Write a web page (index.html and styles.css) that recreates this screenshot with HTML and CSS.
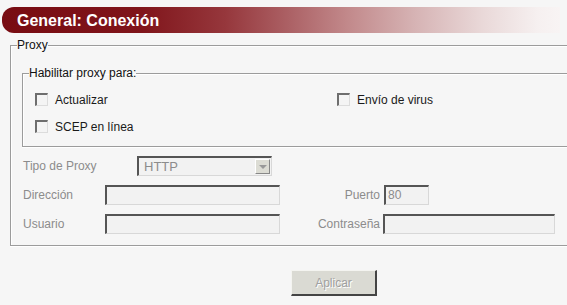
FILE: index.html
```html
<!DOCTYPE html>
<html lang="es">
<head>
    <meta charset="UTF-8">
    <title>General: Conexión</title>
    <link rel="stylesheet" href="styles.css">
</head>
<body>
    <div class="header">General: Conexión</div>

    <fieldset class="group group-outer">
        <legend>Proxy</legend>

        <fieldset class="group group-inner">
            <legend>Habilitar proxy para:</legend>
            <div class="check-row">
                <label class="check-item check-wide"><span class="check"></span>Actualizar</label>
                <label class="check-item"><span class="check"></span>Envío de virus</label>
            </div>
            <div class="check-row">
                <label class="check-item"><span class="check"></span>SCEP en línea</label>
            </div>
        </fieldset>

        <div class="field-row">
            <span class="label label-type">Tipo de Proxy</span>
            <div class="select">
                <span class="select-value">HTTP</span>
                <span class="select-btn"><span class="arrow"></span></span>
            </div>
        </div>
        <div class="field-row">
            <span class="label label-left">Dirección</span>
            <span class="input input-mid"></span>
            <span class="label label-right">Puerto</span>
            <span class="input input-port">80</span>
        </div>
        <div class="field-row">
            <span class="label label-left">Usuario</span>
            <span class="input input-mid"></span>
            <span class="label label-right label-pass">Contraseña</span>
            <span class="input input-pass"></span>
        </div>
    </fieldset>

    <div class="actions">
        <button class="button" disabled>Aplicar</button>
    </div>
</body>
</html>
```

FILE: styles.css
```css
body {
    margin: 0;
    padding: 0;
    background: #f6f6f6;
    font-family: 'Liberation Sans', Arial, sans-serif;
    font-size: 12px;
    color: #1a1a1a;
    overflow: hidden;
}

.header {
    margin: 7px 7px 0 2px;
    height: 26px;
    line-height: 27px;
    padding-left: 15px;
    border-radius: 12px 0 0 12px;
    background: linear-gradient(to right, #780c12 0%, #80151b 25%, #96373c 40%, #ad6367 52%, #c2898b 62%, #d6b3b4 74%, #e9d8d8 86%, #f6f0f0 96%, #f8f4f4 100%);
    color: #fff;
    font-size: 16px;
    font-weight: bold;
}

/* marcos tipo groupbox, abiertos por la derecha */
.group {
    border: 1px solid #9c9c9c;
    border-right: none;
    box-shadow: inset 1px 1px 0 #fff, 0 1px 0 #fff;
    margin: 0;
    min-width: 0;
}

.group legend {
    padding: 0;
    margin: 0;
    line-height: 14px;
    color: #111;
}

.group-outer {
    margin: 5px 0 0 10px;
    padding: 0 0 11px 6px;
}

.group-inner {
    margin: 14px 0 0 5px;
    padding: 0 0 6px 6px;
}

.check-row {
    display: flex;
    align-items: center;
    height: 27px;
}

.check-row:first-of-type {
    margin-top: 6px;
}

.check-item {
    display: flex;
    align-items: center;
    margin-left: 6px;
}

.check-wide {
    width: 296px;
}

.check {
    box-sizing: border-box;
    width: 13px;
    height: 13px;
    margin-right: 7px;
    background: #f4f4f4;
    border-top: 2px solid #6e6e6e;
    border-left: 2px solid #6e6e6e;
    border-right: 1px solid #dcdcdc;
    border-bottom: 1px solid #dcdcdc;
}

.field-row {
    display: flex;
    align-items: center;
    height: 20px;
    margin-top: 9px;
}

.label {
    color: #8c8c8c;
}

.label-type {
    width: 114px;
    margin-left: 6px;
}

.label-left {
    width: 82px;
    margin-left: 6px;
}

.label-right {
    width: 100px;
    text-align: right;
    padding-right: 4px;
}

.label-pass {
    padding-right: 3px;
}

.input,
.select {
    box-sizing: border-box;
    height: 20px;
    background: #f2f2f2;
    border-top: 2px solid #555;
    border-left: 2px solid #555;
    border-right: 1px solid #d8d8d8;
    border-bottom: 1px solid #d8d8d8;
    color: #8c8c8c;
    line-height: 17px;
    padding-left: 2px;
}

.input-mid {
    width: 175px;
}

.input-port {
    width: 45px;
}

.input-pass {
    width: 172px;
}

.select {
    width: 135px;
    display: flex;
    justify-content: space-between;
    align-items: center;
    padding: 0 1px 0 5px;
    font-size: 13px;
}

.select-btn {
    box-sizing: border-box;
    width: 15px;
    height: 15px;
    background: #dcdcd4;
    border-top: 1px solid #fff;
    border-left: 1px solid #fff;
    border-right: 1px solid #888;
    border-bottom: 1px solid #888;
    display: flex;
    align-items: center;
    justify-content: center;
}

.arrow {
    width: 0;
    height: 0;
    border-left: 4px solid transparent;
    border-right: 4px solid transparent;
    border-top: 4px solid #999;
}

.actions {
    padding: 24px 0 0 291px;
}

.button {
    box-sizing: border-box;
    width: 86px;
    height: 26px;
    background: #dadad3;
    border-top: 1px solid #f4f4f0;
    border-left: 1px solid #f4f4f0;
    border-right: 2px solid #444;
    border-bottom: 2px solid #444;
    color: #a0a0a0;
    text-shadow: 1px 1px 0 #fff;
    font-family: 'Liberation Sans', Arial, sans-serif;
    font-size: 12px;
    padding: 0;
}
```
